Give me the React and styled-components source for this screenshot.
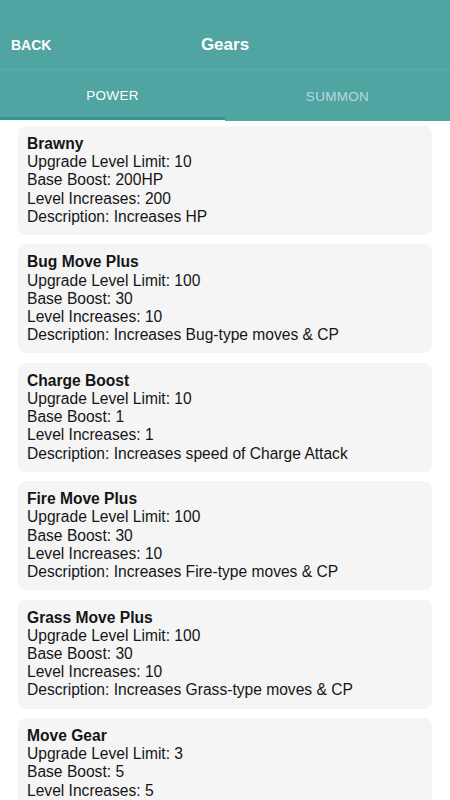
import React, { useState } from 'react'
import styled, { createGlobalStyle } from 'styled-components'

const GlobalStyle = createGlobalStyle`
  body {
    margin: 0;
    background: #ffffff;
    font-family: 'Liberation Sans', Arial, sans-serif;
  }
`

const Page = styled.div`
  width: 450px;
  height: 800px;
  overflow: hidden;
  display: flex;
  flex-direction: column;
`

const Header = styled.div`
  flex-shrink: 0;
  height: 70px;
  background: #50a4a2;
  border-bottom: 1px solid #5dabaa;
  display: grid;
  grid-template-columns: 1fr auto 1fr;
  align-items: center;
  padding-top: 21px;
  box-sizing: border-box;
  color: #ffffff;
`

const BackButton = styled.button`
  justify-self: start;
  background: none;
  border: none;
  color: #ffffff;
  font-family: inherit;
  font-weight: bold;
  font-size: 14px;
  padding: 0 11px;
`

const Title = styled.h1`
  margin: 0;
  font-size: 17px;
  font-weight: bold;
`

const Tabs = styled.div`
  flex-shrink: 0;
  display: flex;
  background: #50a4a2;
  height: 51px;
`

const Tab = styled.div`
  flex: 1;
  display: flex;
  align-items: center;
  justify-content: center;
  font-size: 13.5px;
  letter-spacing: 0.3px;
  color: ${p => (p.active ? '#ffffff' : 'rgba(255,255,255,0.6)')};
  box-sizing: border-box;
  padding-top: 1px;
  border-bottom: ${p => (p.active ? '2px solid #ffffff' : '0')};
  box-shadow: ${p => (p.active ? 'inset 0 -3px 0 #2f9893' : 'none')};
  margin-bottom: ${p => (p.active ? '-1px' : '0')};
`

const List = styled.div`
  display: flex;
  flex-direction: column;
  gap: 9.4px;
  padding: 5px 18px;
`

const Card = styled.div`
  flex-shrink: 0;
  background: #f5f5f5;
  border-radius: 8px;
  padding: 9px 9px 9px;
  color: #151515;
  font-size: 15.6px;
  line-height: 18.2px;
`

const CardTitle = styled.div`
  font-weight: bold;
`

const gears = [
  { name: 'Brawny', limit: 10, base: '200HP', inc: 200, desc: 'Increases HP' },
  { name: 'Bug Move Plus', limit: 100, base: 30, inc: 10, desc: 'Increases Bug-type moves & CP' },
  { name: 'Charge Boost', limit: 10, base: 1, inc: 1, desc: 'Increases speed of Charge Attack' },
  { name: 'Fire Move Plus', limit: 100, base: 30, inc: 10, desc: 'Increases Fire-type moves & CP' },
  { name: 'Grass Move Plus', limit: 100, base: 30, inc: 10, desc: 'Increases Grass-type moves & CP' },
  { name: 'Move Gear', limit: 3, base: 5, inc: 5, desc: 'Increases move damage' },
]

export default function App() {
  const [tab, setTab] = useState('power')
  return (
    <Page>
      <GlobalStyle />
      <Header>
        <BackButton>BACK</BackButton>
        <Title>Gears</Title>
        <span />
      </Header>
      <Tabs>
        <Tab active={tab === 'power'} onClick={() => setTab('power')}>POWER</Tab>
        <Tab active={tab === 'summon'} onClick={() => setTab('summon')}>SUMMON</Tab>
      </Tabs>
      <List>
        {gears.map(g => (
          <Card key={g.name}>
            <CardTitle>{g.name}</CardTitle>
            <div>Upgrade Level Limit: {g.limit}</div>
            <div>Base Boost: {g.base}</div>
            <div>Level Increases: {g.inc}</div>
            <div>Description: {g.desc}</div>
          </Card>
        ))}
      </List>
    </Page>
  )
}
